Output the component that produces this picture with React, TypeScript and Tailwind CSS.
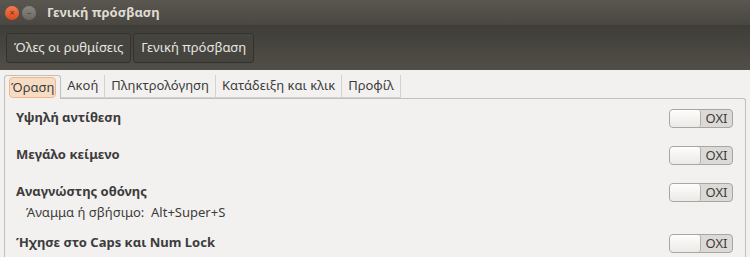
import { useState } from 'react'

const TABS = ['Όραση', 'Ακοή', 'Πληκτρολόγηση', 'Κατάδειξη και κλικ', 'Προφίλ']

interface Row {
  label: string
  sub?: string
}

const ROWS: Row[] = [
  { label: 'Υψηλή αντίθεση' },
  { label: 'Μεγάλο κείμενο' },
  { label: 'Αναγνώστης οθόνης', sub: 'Άναμμα ή σβήσιμο:  Alt+Super+S' },
  { label: 'Ήχησε στο Caps και Num Lock' },
]

function Switch() {
  return (
    <div className="flex h-[19px] w-[64px] shrink-0 overflow-hidden rounded-[4px] border border-[#a8a6a1] bg-[#dcdad6]">
      <div className="w-[31px] rounded-[3px] border-r border-[#b3b1ac] bg-gradient-to-b from-[#fdfdfc] to-[#eceae7]" />
      <div className="flex flex-1 items-center justify-center text-[13px] leading-none text-[#3c3c3c]">ΟΧΙ</div>
    </div>
  )
}

export default function App() {
  const [active, setActive] = useState(0)

  return (
    <div className="flex h-[257px] w-[750px] flex-col overflow-hidden bg-[#f2f1f0] font-['Noto_Sans','DejaVu_Sans',sans-serif]">
      <div className="flex h-[25px] shrink-0 items-center gap-[3px] bg-gradient-to-b from-[#5a5650] to-[#4a4742] px-[5px]">
        <div className="flex h-[14px] w-[14px] items-center justify-center rounded-full bg-gradient-to-b from-[#f47a50] to-[#d8491e] text-[9px] leading-none text-[#7a2a10]">
          ×
        </div>
        <div className="flex h-[14px] w-[14px] items-center justify-center rounded-full bg-gradient-to-b from-[#8a8782] to-[#6b6863] text-[9px] leading-none text-[#4a4742]">
          –
        </div>
        <span className="ml-[8px] text-[13px] font-bold text-[#dfdbd2]">Γενική πρόσβαση</span>
      </div>

      <div className="flex h-[45px] shrink-0 items-center gap-[2px] bg-gradient-to-b from-[#3f3d38] to-[#524f48] px-[6px]">
        <button className="h-[30px] rounded-[3px] border border-[#34322e] bg-[#46443f] px-[7px] text-[13px] text-[#e8e6e1]">
          Όλες οι ρυθμίσεις
        </button>
        <button className="h-[30px] rounded-[3px] border border-[#34322e] bg-[#46443f] px-[7px] text-[13px] text-[#e8e6e1]">
          Γενική πρόσβαση
        </button>
      </div>

      <div className="flex flex-1 flex-col px-[4px] pt-[5px]">
        <div className="flex h-[23px] shrink-0 items-stretch">
          {TABS.map((t, i) => (
            <button
              key={t}
              onClick={() => setActive(i)}
              className={
                i === active
                  ? 'relative z-10 -mb-px flex items-center rounded-t-[3px] border border-b-0 border-[#c2c0bb] bg-[#f2f1f0] px-[5px] text-[13px] text-[#3c3c3c]'
                  : 'flex items-center border-r border-b border-[#d4d2ce] px-[6px] text-[13px] text-[#3c3c3c]'
              }
            >
              <span className={i === active ? 'rounded-[3px] bg-[#f7dcc5] px-[1px] outline outline-1 outline-[#f0b58a]' : ''}>
                {t}
              </span>
            </button>
          ))}
          <div className="flex-1" />
        </div>
        <div className="flex flex-1 flex-col rounded-tr-[3px] border border-b-0 border-[#c2c0bb] pl-[11px] pr-[12px] pt-[10px]">
          {ROWS.map((r) => (
            <div key={r.label} className="flex shrink-0 items-start justify-between" style={{ height: r.sub ? 51 : 37 }}>
              <div className="flex flex-col">
                <span className="text-[13px] font-bold leading-[16px] text-[#3c3c3c]">{r.label}</span>
                {r.sub && (
                  <span className="mt-[5px] whitespace-pre pl-[10px] text-[13px] leading-[16px] text-[#3c3c3c]">{r.sub}</span>
                )}
              </div>
              <Switch />
            </div>
          ))}
        </div>
      </div>
    </div>
  )
}
